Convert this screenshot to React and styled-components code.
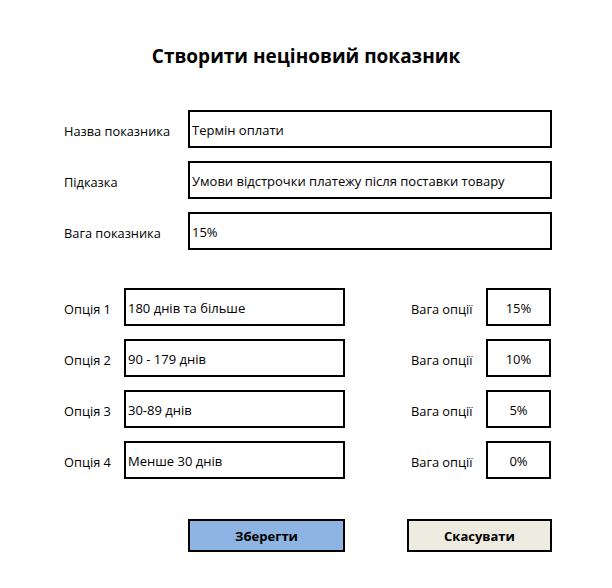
import React from 'react';
import styled, { createGlobalStyle } from 'styled-components';

const Global = createGlobalStyle`
    body {
        margin: 0;
        background: #fff;
        font-family: "Open Sans", "Liberation Sans", sans-serif;
        color: #000;
    }
`;

const Page = styled.div`
    width: 612px;
    height: 588px;
    box-sizing: border-box;
    padding: 42px 0 0 64px;
`;

const Title = styled.h1`
    margin: 0 0 0 -64px;
    width: 612px;
    text-align: center;
    font-size: 19px;
    font-weight: 700;
    line-height: 28px;
`;

const Fields = styled.div`
    margin-top: 40px;
    display: grid;
    grid-template-columns: 124px 364px;
    row-gap: 13px;
    align-items: center;
`;

const Label = styled.div`
    font-size: 12.8px;
    line-height: 16px;
    padding-top: 3px;
`;

const Box = styled.div`
    height: 38px;
    box-sizing: border-box;
    border: 2px solid #000;
    display: flex;
    align-items: center;
    justify-content: ${p => (p.$center ? 'center' : 'flex-start')};
    padding: 2px 0 0 ${p => (p.$center ? '0' : '2px')};
    font-size: 13px;
`;

const Options = styled.div`
    margin-top: 38px;
    display: grid;
    grid-template-columns: 60px 221px 66px 75px 65px;
    row-gap: 13px;
    align-items: center;
`;

const Spacer = styled.div``;

const Buttons = styled.div`
    margin-top: 40px;
    margin-left: 124px;
    display: flex;
    gap: 62px;
`;

const Button = styled.button`
    width: ${p => p.$w}px;
    height: 33px;
    box-sizing: border-box;
    border: 2px solid #000;
    background: ${p => p.$bg};
    font-family: inherit;
    font-size: 13px;
    font-weight: 700;
    padding: 0;
    cursor: pointer;
`;

const fields = [
    ['Назва показника', 'Термін оплати'],
    ['Підказка', 'Умови відстрочки платежу після поставки товару'],
    ['Вага показника', '15%'],
];

const options = [
    ['Опція 1', '180 днів та більше', '15%'],
    ['Опція 2', '90 - 179 днів', '10%'],
    ['Опція 3', '30-89 днів', '5%'],
    ['Опція 4', 'Менше 30 днів', '0%'],
];

export default function App() {
    return (
        <Page>
            <Global />
            <Title>Створити неціновий показник</Title>
            <Fields>
                {fields.map(([label, value]) => (
                    <React.Fragment key={label}>
                        <Label>{label}</Label>
                        <Box>{value}</Box>
                    </React.Fragment>
                ))}
            </Fields>
            <Options>
                {options.map(([label, value, weight]) => (
                    <React.Fragment key={label}>
                        <Label>{label}</Label>
                        <Box>{value}</Box>
                        <Spacer />
                        <Label>Вага опції</Label>
                        <Box $center>{weight}</Box>
                    </React.Fragment>
                ))}
            </Options>
            <Buttons>
                <Button $w={157} $bg="#8db4e2">Зберегти</Button>
                <Button $w={145} $bg="#eeece1">Скасувати</Button>
            </Buttons>
        </Page>
    );
}
